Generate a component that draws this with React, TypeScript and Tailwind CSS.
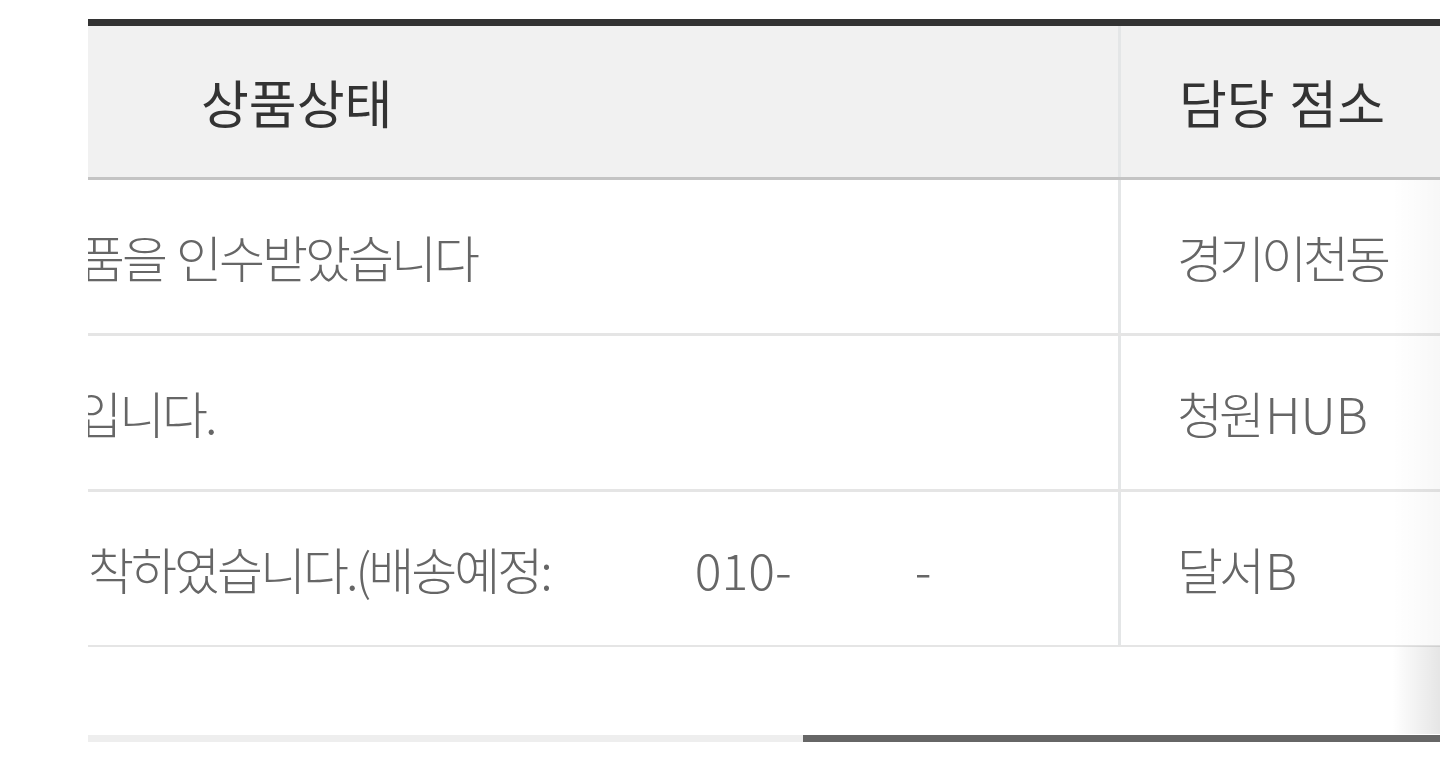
import React from 'react'

const font = { fontFamily: '"Noto Sans CJK KR", "Noto Sans", sans-serif' }

type Row = {
  status: React.ReactNode
  branch: string
  branchLatin?: string
  last?: boolean
}

const rows: Row[] = [
  {
    status: <span className="-ml-[9px] tracking-[-3px] [word-spacing:3px]">품을 인수받았습니다</span>,
    branch: '경기이천동',
  },
  {
    status: <span className="-ml-[12px] tracking-[-3px]">입니다.</span>,
    branch: '청원',
    branchLatin: 'HUB',
  },
  {
    status: (
      <span className="flex items-center">
        <span className="tracking-[-3px]">착하였습니다.(배송예정:</span>
        <span className="ml-[145px] tracking-[0px]">010-</span>
        <span className="ml-[123px] tracking-[0px]">-</span>
      </span>
    ),
    branch: '달서',
    branchLatin: 'B',
    last: true,
  },
]

export default function App() {
  return (
    <div className="w-[1440px] h-[767px] bg-white overflow-hidden pt-[19px] pl-[88px]" style={font}>
      <div className="relative">
        {/* table */}
        <div className="border-t-[7px] border-[#333333]">
          <div className="flex h-[154px] bg-[#f1f1f1] border-b-[3px] border-[#c4c4c4] text-[52px] font-normal text-[#333333]">
            <div className="w-[1030px] flex items-center pl-[113px] whitespace-nowrap">상품상태</div>
            <div className="w-[3px] bg-[#e4e6e7]" />
            <div className="flex-1 flex items-center pl-[58px] whitespace-nowrap [word-spacing:3px]">담당 점소</div>
          </div>

          {rows.map((row, i) => (
            <div
              key={i}
              className={
                row.last
                  ? 'flex h-[155px] border-b-2 border-[#e5e5e5] text-[50px] font-light text-[#666666]'
                  : 'flex h-[156px] border-b-[3px] border-[#e5e5e5] text-[50px] font-light text-[#666666]'
              }
            >
              <div className="w-[1030px] flex items-center overflow-hidden whitespace-nowrap">{row.status}</div>
              <div className="w-[3px] bg-[#e4e6e7]" />
              <div className="flex-1 flex items-center pl-[56px] whitespace-nowrap">
                <span className="tracking-[-4px]">{row.branch}</span>
                {row.branchLatin && <span className="ml-[4px]">{row.branchLatin}</span>}
              </div>
            </div>
          ))}
        </div>

        {/* empty space under table */}
        <div className="h-[88px]" />

        {/* scrollbar */}
        <div className="flex h-[7px] bg-[#eeeeee]">
          <div className="w-[715px]" />
          <div className="flex-1 bg-[#666666]" />
        </div>

        {/* right edge scroll shade */}
        <div className="absolute right-0 top-[161px] w-[48px] h-[466px] bg-gradient-to-r from-white/0 to-black/[0.03] pointer-events-none" />
        <div className="absolute right-0 top-[627px] w-[48px] h-[88px] bg-gradient-to-r from-white/0 to-black/10 pointer-events-none" />
      </div>
    </div>
  )
}
